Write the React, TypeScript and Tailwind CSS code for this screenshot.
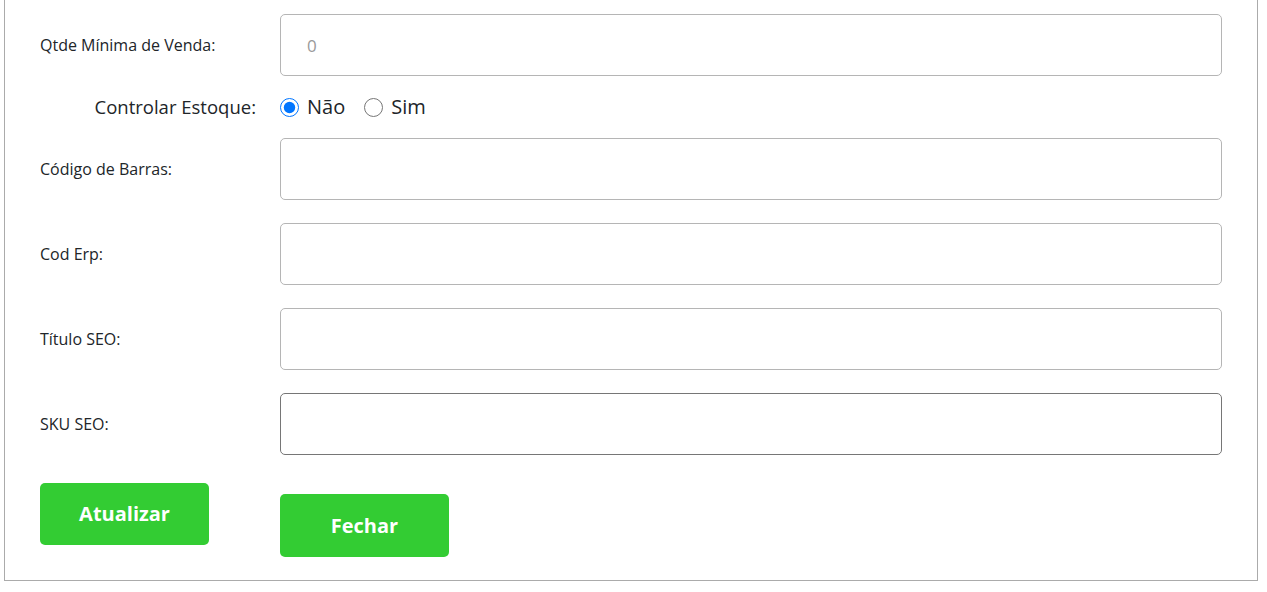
const fields = [
  { label: 'Código de Barras:' },
  { label: 'Cod Erp:' },
  { label: 'Título SEO:' },
  { label: 'SKU SEO:', dark: true },
]

function Row({ label, placeholder, dark }: { label: string; placeholder?: string; dark?: boolean }) {
  return (
    <div className="flex items-center">
      <label className="w-[240px] shrink-0 text-[16px] text-[#212529]">{label}</label>
      <input
        placeholder={placeholder}
        className={`h-[62px] w-[942px] rounded-[5px] border bg-white pl-[26px] text-[17px] outline-none placeholder:text-[#9a9a9a] ${
          dark ? 'border-[#767676]' : 'border-[#b5b5b5]'
        }`}
      />
    </div>
  )
}

export default function App() {
  return (
    <div className="min-h-[592px] bg-white" style={{ fontFamily: '"Open Sans", "Noto Sans", sans-serif' }}>
      <div className="ml-[4px] w-[1254px] border-x border-b border-[#ababab] pl-[35px] pt-[14px] pb-[23px]">
        <Row label="Qtde Mínima de Venda:" placeholder="0" />

        <div className="my-[19px] flex h-[24px] items-center text-[#212529]">
          <span className="w-[240px] shrink-0 pr-[24px] text-right text-[18.5px]">Controlar Estoque:</span>
          <label className="flex items-center gap-[8px] text-[20px]">
            <input type="radio" name="estoque" defaultChecked className="m-0 h-[19px] w-[19px] accent-[#0075ff]" />
            Não
          </label>
          <label className="ml-[19px] flex items-center gap-[8px] text-[20px]">
            <input type="radio" name="estoque" className="m-0 h-[19px] w-[19px]" />
            Sim
          </label>
        </div>

        <div className="flex flex-col gap-[23px]">
          {fields.map((f) => (
            <Row key={f.label} label={f.label} dark={f.dark} />
          ))}
        </div>

        <div className="mt-[28px] flex items-start">
          <button className="h-[62px] w-[169px] rounded-[5px] bg-[#33cc33] text-[20px] font-bold text-white">
            Atualizar
          </button>
          <button className="ml-[71px] mt-[11px] h-[63px] w-[169px] rounded-[5px] bg-[#33cc33] text-[20px] font-bold text-white">
            Fechar
          </button>
        </div>
      </div>
    </div>
  )
}
